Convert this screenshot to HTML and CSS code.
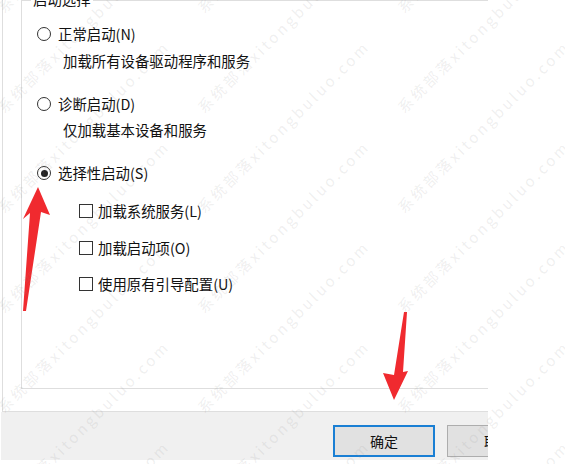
FILE: index.html
```html
<!DOCTYPE html>
<html lang="zh-CN">
<head>
<meta charset="utf-8">
<title>系统配置</title>
<link rel="stylesheet" href="styles.css">
</head>
<body>
<div class="page">
  <div class="dialog">
    <div class="panel">
      <div class="group">
        <span class="legend">启动选择</span>
        <div class="opt radio-row r1"><span class="radio"></span><span>正常启动(N)</span></div>
        <div class="desc d1">加载所有设备驱动程序和服务</div>
        <div class="opt radio-row r2"><span class="radio"></span><span>诊断启动(D)</span></div>
        <div class="desc d2">仅加载基本设备和服务</div>
        <div class="opt radio-row r3"><span class="radio checked"></span><span>选择性启动(S)</span></div>
        <div class="checks">
          <div class="opt check-row"><span class="box"></span><span>加载系统服务(L)</span></div>
          <div class="opt check-row"><span class="box"></span><span>加载启动项(O)</span></div>
          <div class="opt check-row"><span class="box"></span><span>使用原有引导配置(U)</span></div>
        </div>
      </div>
    </div>
    <div class="footer">
      <button class="btn primary">确定</button>
      <button class="btn">取消</button>
    </div>
  </div>

  <svg class="arrows" width="565" height="464" viewBox="0 0 565 464">
    <polygon fill="#f02a2f" points="38,187 50,215 41,212 26,311 23,311 30,213 23,219"/>
    <polygon fill="#f02a2f" points="404,312 407,312 403,372 408,371 394,400 383,373 394,375"/>
  </svg>

  <div class="wm">
    <span class="w" style="left:5px;top:0px">系统部落xitongbuluo.com</span>
    <span class="w" style="left:205px;top:0px">系统部落xitongbuluo.com</span>
    <span class="w" style="left:405px;top:0px">系统部落xitongbuluo.com</span>
    <span class="w" style="left:5px;top:100px">系统部落xitongbuluo.com</span>
    <span class="w" style="left:205px;top:100px">系统部落xitongbuluo.com</span>
    <span class="w" style="left:405px;top:100px">系统部落xitongbuluo.com</span>
    <span class="w" style="left:5px;top:200px">系统部落xitongbuluo.com</span>
    <span class="w" style="left:205px;top:200px">系统部落xitongbuluo.com</span>
    <span class="w" style="left:405px;top:200px">系统部落xitongbuluo.com</span>
    <span class="w" style="left:5px;top:300px">系统部落xitongbuluo.com</span>
    <span class="w" style="left:205px;top:300px">系统部落xitongbuluo.com</span>
    <span class="w" style="left:405px;top:300px">系统部落xitongbuluo.com</span>
    <span class="w" style="left:5px;top:400px">系统部落xitongbuluo.com</span>
    <span class="w" style="left:205px;top:400px">系统部落xitongbuluo.com</span>
    <span class="w" style="left:405px;top:400px">系统部落xitongbuluo.com</span>
    <span class="w" style="left:5px;top:500px">系统部落xitongbuluo.com</span>
    <span class="w" style="left:205px;top:500px">系统部落xitongbuluo.com</span>
    <span class="w" style="left:405px;top:500px">系统部落xitongbuluo.com</span>
    <span class="w" style="left:5px;top:600px">系统部落xitongbuluo.com</span>
    <span class="w" style="left:205px;top:600px">系统部落xitongbuluo.com</span>
    <span class="w" style="left:405px;top:600px">系统部落xitongbuluo.com</span>
  </div>
</div>
</body>
</html>
```

FILE: styles.css
```css
html, body {
  margin: 0;
  padding: 0;
  background: #ffffff;
}
body {
  font-family: "Noto Sans CJK SC", "Noto Sans", sans-serif;
  font-size: 14.4px;
  color: #111111;
}
.page {
  position: relative;
  width: 565px;
  height: 464px;
  overflow: hidden;
}
.dialog {
  width: 488px;
  overflow: hidden;
}
.panel {
  margin-left: 2px;
  height: 411px;
  border-left: 1px solid #dedede;
  border-bottom: 1px solid #dedede;
}
.group {
  position: relative;
  margin-left: 18px;
  height: 364px;
  padding: 23px 0 0 15px;
  border: 1px solid #dedede;
  border-right: none;
  display: flex;
  flex-direction: column;
}
.legend {
  position: absolute;
  top: -11px;
  left: 9px;
  padding: 0 2px;
  background: #fff;
  line-height: 17px;
}
.opt {
  display: flex;
  align-items: center;
  height: 20px;
  line-height: 20px;
  white-space: nowrap;
}
.radio {
  width: 12px;
  height: 12px;
  border: 1px solid #333;
  border-radius: 50%;
  margin-right: 7px;
  background: #fff;
  display: flex;
  align-items: center;
  justify-content: center;
  flex: none;
}
.radio.checked::after {
  content: "";
  width: 7px;
  height: 7px;
  border-radius: 50%;
  background: #222;
}
.desc {
  height: 20px;
  line-height: 20px;
  padding-left: 26px;
  margin-top: 7px;
  white-space: nowrap;
}
.r2, .r3 {
  margin-top: 23px;
}
.d2 {
  margin-top: 6px;
}
.checks {
  margin-top: 18px;
  padding-left: 42px;
  display: flex;
  flex-direction: column;
  gap: 16.5px;
}
.box {
  width: 12px;
  height: 12px;
  border: 1px solid #333;
  background: #fff;
  margin-right: 5px;
  flex: none;
}
.footer {
  height: 48px;
  margin-left: 1px;
  background: #f0f0f0;
  display: flex;
  align-items: flex-start;
  padding: 13px 0 0 332px;
  gap: 12px;
  box-sizing: border-box;
  white-space: nowrap;
}
.btn {
  flex: none;
  width: 102px;
  height: 32px;
  font-family: "Noto Sans CJK SC", sans-serif;
  font-size: 14px;
  color: #111;
  background: #e1e1e1;
  border: 1px solid #adadad;
  padding: 0;
  margin: 0;
}
.btn.primary {
  border: 2px solid #1a7fd4;
}
.arrows {
  position: absolute;
  left: 0;
  top: 0;
}
.wm {
  position: absolute;
  left: 0;
  top: 0;
  width: 565px;
  height: 464px;
  pointer-events: none;
}
.w {
  position: absolute;
  font-family: "Noto Sans CJK SC", "DejaVu Sans", sans-serif;
  font-size: 15px;
  line-height: 15px;
  letter-spacing: 3px;
  color: rgba(140, 140, 140, 0.14);
  white-space: nowrap;
  transform-origin: 0 100%;
  transform: rotate(-45deg);
}
```
